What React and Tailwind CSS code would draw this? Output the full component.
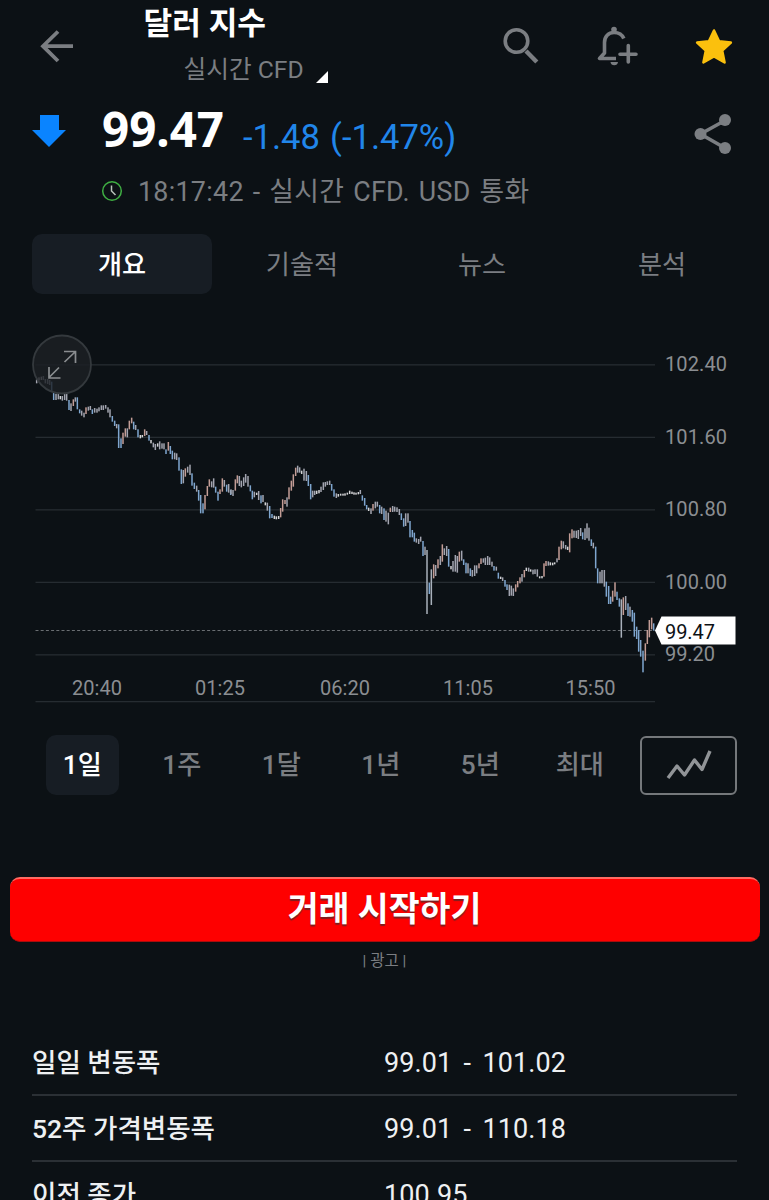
import clsx from 'clsx';

const TABS = ['개요', '기술적', '뉴스', '분석'];
const RANGES = ['1일', '1주', '1달', '1년', '5년', '최대'];

const STATS = [
  { label: '일일 변동폭', value: '99.01 - 101.02' },
  { label: '52주 가격변동폭', value: '99.01 - 110.18' },
  { label: '이전 종가', value: '100.95' },
];

const PRICE_TICKS = [
  { y: 45, label: '102.40' },
  { y: 117.5, label: '101.60' },
  { y: 190, label: '100.80' },
  { y: 262.5, label: '100.00' },
  { y: 335, label: '99.20' },
];

const TIME_TICKS = [
  { x: 97, label: '20:40' },
  { x: 220, label: '01:25' },
  { x: 345, label: '06:20' },
  { x: 468, label: '11:05' },
  { x: 590.5, label: '15:50' },
];

// Each bar is [x, high, low] in thirds of a pixel from the segment's origin.
const SEGMENTS = [
  {
    x: 20,
    y: 0,
    bars: [
      [50, 178, 190], [57, 172, 182], [64, 170, 180], [70, 168, 180], [76, 177, 190], [83, 177, 192], [89, 180, 195],
      [95, 185, 215], [101, 219, 240], [108, 222, 240], [115, 220, 238], [121, 228, 238], [127, 228, 242], [134, 218, 240],
      [140, 220, 242], [147, 240, 270], [153, 250, 273], [160, 238, 258], [166, 232, 245], [172, 232, 268], [179, 268, 280],
      [185, 272, 287], [192, 278, 292], [198, 262, 282], [205, 260, 272], [211, 258, 270], [217, 268, 282], [224, 264, 278],
      [231, 266, 278], [237, 262, 274], [244, 256, 270], [250, 256, 270], [257, 255, 266], [264, 262, 278], [270, 268, 292],
      [277, 288, 305], [284, 302, 318], [290, 312, 325], [296, 313, 384], [303, 355, 384], [309, 338, 372], [316, 325, 350],
      [322, 325, 352], [328, 302, 328], [335, 293, 310], [341, 305, 328], [347, 315, 330], [354, 328, 352], [361, 345, 355],
      [367, 345, 352], [374, 328, 348], [380, 333, 345], [387, 345, 362], [393, 360, 370], [400, 368, 382], [406, 372, 390],
      [413, 370, 380], [419, 364, 388], [426, 370, 386], [432, 370, 388], [438, 388, 402], [445, 366, 392], [451, 378, 402],
      [457, 392, 418], [464, 398, 418], [470, 400, 420], [477, 412, 452], [484, 448, 492], [490, 450, 490], [496, 445, 470],
      [503, 440, 458], [510, 434, 465], [516, 460, 497], [523, 488, 507], [530, 497, 515], [536, 510, 542], [542, 525, 580],
      [549, 550, 580], [555, 525, 568], [562, 498, 528], [568, 478, 500], [575, 484, 502], [581, 475, 503], [587, 500, 518],
      [594, 515, 542], [600, 508, 522], [607, 475, 515], [613, 480, 500], [620, 494, 515], [626, 492, 518], [632, 510, 525],
    ],
  },
  {
    x: 230,
    y: 120,
    bars: [
      [3, 148, 163], [9, 150, 168], [16, 118, 152], [22, 106, 130], [28, 108, 138], [34, 122, 142], [41, 112, 138],
      [47, 102, 128], [54, 108, 140], [61, 136, 154], [67, 152, 178], [73, 155, 172], [80, 158, 165], [86, 153, 180],
      [93, 166, 190], [99, 165, 186], [106, 187, 196], [112, 188, 212], [119, 198, 235], [126, 222, 234], [133, 227, 237],
      [139, 229, 238], [146, 228, 237], [152, 204, 232], [158, 178, 215], [165, 180, 192], [171, 172, 200], [177, 142, 178],
      [184, 122, 152], [190, 103, 140], [197, 83, 108], [203, 77, 98], [209, 82, 98], [215, 92, 102], [222, 86, 122],
      [229, 93, 123], [235, 105, 138], [242, 132, 178], [248, 152, 172], [254, 152, 165], [260, 152, 162], [267, 150, 160],
      [273, 140, 156], [280, 127, 150], [286, 126, 140], [292, 124, 135], [299, 122, 135], [305, 132, 152], [312, 148, 170],
      [319, 160, 174], [325, 162, 170], [332, 161, 167], [339, 161, 167], [345, 160, 167], [352, 158, 164], [359, 152, 162],
      [366, 155, 162], [372, 157, 164], [378, 158, 164], [385, 156, 163], [391, 150, 162], [397, 166, 182], [404, 174, 197],
      [410, 195, 208], [416, 203, 213], [423, 205, 222], [429, 192, 212], [436, 185, 205], [442, 185, 200], [449, 195, 220],
      [455, 200, 222], [462, 205, 240], [468, 212, 245], [475, 218, 253], [481, 203, 216], [488, 198, 216], [494, 200, 215],
      [501, 202, 216], [508, 207, 225], [514, 220, 240], [521, 235, 260], [527, 220, 258], [534, 220, 248], [540, 243, 292],
      [547, 270, 292], [553, 278, 305], [559, 295, 308], [566, 297, 312], [572, 290, 305], [579, 303, 348], [585, 320, 345],
      [591, 330, 522], [598, 428, 462],
    ],
  },
  {
    x: 430,
    y: 180,
    bars: [
      [4, 208, 315], [11, 193, 235], [17, 195, 228], [24, 178, 205], [31, 168, 195], [37, 133, 185], [43, 145, 165],
      [50, 138, 168], [56, 147, 200], [63, 198, 208], [69, 183, 215], [76, 165, 215], [82, 168, 218], [88, 155, 185],
      [95, 152, 182], [101, 178, 195], [108, 188, 220], [114, 190, 220], [121, 205, 228], [127, 210, 230], [134, 196, 228],
      [140, 196, 220], [147, 190, 205], [153, 175, 192], [160, 175, 188], [166, 173, 195], [173, 168, 195], [179, 172, 195],
      [186, 185, 200], [192, 198, 212], [199, 200, 212], [205, 218, 236], [212, 230, 237], [218, 232, 243], [225, 240, 260],
      [231, 253, 270], [238, 254, 288], [244, 257, 287], [250, 265, 288], [257, 253, 275], [263, 243, 262], [270, 232, 250],
      [276, 222, 245], [283, 210, 232], [289, 203, 213], [296, 203, 215], [302, 208, 215], [309, 209, 223], [315, 208, 222],
      [322, 208, 230], [329, 229, 235], [336, 228, 235], [342, 190, 230], [348, 183, 198], [355, 184, 197], [361, 187, 196],
      [368, 188, 196], [374, 187, 193], [381, 175, 187], [387, 140, 180], [394, 122, 148], [400, 124, 145], [407, 135, 148],
      [413, 140, 150], [419, 100, 157], [426, 88, 115], [432, 92, 113], [439, 92, 114], [445, 90, 117], [452, 84, 108],
      [458, 97, 118], [465, 85, 120], [471, 70, 115], [477, 83, 122], [484, 118, 138], [490, 128, 145], [497, 140, 205],
      [503, 205, 250], [510, 215, 250], [516, 210, 250], [523, 210, 260], [529, 245, 290], [536, 258, 312], [542, 290, 312],
      [548, 272, 305], [555, 247, 290], [561, 275, 300], [568, 295, 320], [574, 298, 413], [580, 292, 345], [587, 288, 330],
      [594, 310, 348], [600, 320, 350], [607, 330, 365], [613, 338, 410], [620, 380, 417], [626, 390, 455], [632, 420, 470],
      [639, 452, 517], [646, 430, 482], [652, 390, 432], [658, 360, 412], [665, 353, 388], [671, 370, 392],
    ],
  },
];

function barColor(bars, i) {
  const [, high, low] = bars[i];
  if (low - high < 11) return '#d3d4d6';
  const prev = bars[i - 1] || bars[i];
  const move = high + low - prev[1] - prev[2];
  if (low - high > 100) return '#a9b1bb';
  if (move > 20) return '#7fa6cf';
  if (move < -20) return '#c39d96';
  return '#a3a5b0';
}

export default function App() {
  return (
    <div className="h-[1200px] w-full overflow-hidden bg-[#0c1115] font-['Roboto','Noto_Sans_CJK_KR',sans-serif] text-[#7b7e82]">
      <Header />
      <Quote />
      <Tabs />
      <Chart />
      <RangeBar />
      <TradeBanner />
      <Stats />
    </div>
  );
}

function Header() {
  return (
    <header className="flex h-[92px] items-center">
      <svg viewBox="0 0 34 34" className="mt-0.5 ml-[39.500px] size-[34px] shrink-0" fill="none" stroke="#7b7e82" strokeWidth="3.8">
        <path d="M33 16.200H3M18 1.500 3 16.200 18 31" />
      </svg>
      <div className="ml-[70px] w-[186px] self-start pt-0.5">
        <h1 className="h-[44px] text-[31.200px] leading-[44px] font-bold whitespace-nowrap text-white">달러 지수</h1>
        <div className="ml-10 flex items-end">
          <span className="text-[24.700px] leading-[48px] whitespace-nowrap">실시간 CFD</span>
          <svg viewBox="0 0 12 12" className="mb-[11px] ml-3 size-3 shrink-0">
            <path d="M12 0v12H0z" fill="#fff" />
          </svg>
        </div>
      </div>
      <svg viewBox="0 0 38 38" className="ml-[172px] size-[38px] shrink-0" fill="none" stroke="#7b7e82">
        <circle cx="14.500" cy="14" r="11.300" strokeWidth="3.600" />
        <path d="m24 24 10.800 11" strokeWidth="4.400" />
      </svg>
      <svg viewBox="0 0 42 42" className="ml-[56px] size-[42px] shrink-0" fill="none" stroke="#7b7e82">
        <path
          d="M27.800 13.500C26 9 22 7.500 18 7.500c-5.500 0-9.500 4-9.500 10V28l-5 5.500H20"
          strokeWidth="3.600"
          strokeLinejoin="round"
        />
        <circle cx="18" cy="4.500" r="2.800" fill="#7b7e82" stroke="none" />
        <path d="M14.500 37h7.500a3.800 3.800 0 0 1-7.500 0z" fill="#7b7e82" stroke="none" />
        <path d="M32.300 20.500v16.500M24 29.300h16" strokeWidth="3.600" strokeLinecap="round" />
      </svg>
      <svg viewBox="0 0 40 38" className="ml-[56px] h-[38px] w-[40px] shrink-0">
        <path
          d="m20 3.500 5.100 10.700 11.800 1.300-8.700 8 2.400 12L20 29.500 9.400 35.500l2.400-12-8.700-8 11.800-1.300z"
          fill="#fbc00d"
          stroke="#fbc00d"
          strokeWidth="2.500"
          strokeLinejoin="round"
        />
      </svg>
    </header>
  );
}

function Quote() {
  return (
    <section className="h-[142px]">
      <div className="flex h-[76px] items-center">
        <svg viewBox="0 0 34 32" className="mt-0.5 ml-8 h-8 w-[34px] shrink-0">
          <path d="M8 0h19v15h7L17 32 0 15h8z" fill="#0a84ff" />
        </svg>
        <span className="-mt-0.5 ml-[36px] w-[140px] font-['Noto_Sans',sans-serif] text-[47.500px] leading-[76px] font-bold text-white">
          99.47
        </span>
        <span className="mt-[14px] ml-px w-[220px] text-[34.600px] leading-[48px] [word-spacing:1.5px] whitespace-nowrap text-[#2186ea]">
          -1.48 (-1.47%)
        </span>
        <svg viewBox="0 0 38 42" className="mt-2 ml-[231px] h-[42px] w-[38px] shrink-0" fill="#7b7e82">
          <path d="M31 7.500 6.500 21 31 35" fill="none" stroke="#7b7e82" strokeWidth="3.600" />
          <circle cx="6.500" cy="21" r="6" />
          <circle cx="31" cy="7" r="6" />
          <circle cx="31" cy="35" r="6" />
        </svg>
      </div>
      <div className="flex h-[46px] items-center">
        <svg viewBox="0 0 22 22" className="ml-[101px] size-[22px] shrink-0" fill="none">
          <circle cx="11" cy="11" r="9.300" stroke="#3fae43" strokeWidth="1.500" />
          <path d="M10.500 5.500V11l4 4" stroke="#b9c4bb" strokeWidth="1.500" />
        </svg>
        <span className="ml-[15px] pt-0.5 text-[26.800px] tracking-[0.3px] [word-spacing:2px] whitespace-nowrap">
          18:17:42 - 실시간 CFD. USD 통화
        </span>
      </div>
    </section>
  );
}

function Tabs() {
  return (
    <nav className="ml-8 grid w-[720px] grid-cols-4">
      {TABS.map((tab, i) => (
        <button
          key={tab}
          className={clsx('h-[60px] rounded-[10px] pt-1 text-[26.200px]', i === 0 && 'bg-[#171d24] font-medium text-white')}
        >
          {tab}
        </button>
      ))}
    </nav>
  );
}

function Chart() {
  return (
    <svg viewBox="0 0 769 384" className="mt-[26px] block h-[384px] w-[769px]">
      <g fill="#262c31">
        {PRICE_TICKS.map((t) => (
          <rect key={t.label} x="35.500" y={t.y - 0.8} width="619.500" height="1.300" />
        ))}
        <rect x="35.500" y="381" width="619.500" height="1.300" />
      </g>
      <path d="M35.500 310.500h619" stroke="#6a6e72" strokeWidth="1" strokeDasharray="3 2.200" />

      {SEGMENTS.map((seg) => (
        <g key={seg.x} transform={`translate(${seg.x} ${seg.y})`}>
          {seg.bars.map(([x, high, low], i) => (
            <rect
              key={x}
              x={x / 3 - 0.75}
              y={high / 3}
              width="1.500"
              height={(low - high) / 3}
              fill={barColor(seg.bars, i)}
            />
          ))}
        </g>
      ))}

      {/* expand button */}
      <circle cx="62" cy="44.500" r="29" fill="#1c2024" fillOpacity="0.820" stroke="#34393d" strokeWidth="1.800" />
      <path
        d="M64 31.500h11.500v11.500M75 32 64.500 42M49 47v11h11.500M49 57.500 59 47.500"
        fill="none"
        stroke="#8a8d90"
        strokeWidth="1.700"
      />

      <g fill="#8b8e92" fontSize="20">
        {PRICE_TICKS.map((t) => (
          <text key={t.label} x="665" y={t.y + 6} textLength={t.label.length > 5 ? 62 : 50}>
            {t.label}
          </text>
        ))}
        {TIME_TICKS.map((t) => (
          <text key={t.label} x={t.x} y="375" textAnchor="middle">
            {t.label}
          </text>
        ))}
      </g>

      <path d="M655 310.500 661.500 296.500h74v28h-74z" fill="#fff" />
      <text x="665" y="318.500" fontSize="20" fill="#0c1115" textLength="50">
        99.47
      </text>
    </svg>
  );
}

function RangeBar() {
  return (
    <div className="mt-[31px] flex h-[60px] items-center">
      <div className="ml-[32.500px] grid w-[597px] grid-cols-6 justify-items-center">
        {RANGES.map((range, i) => (
          <button
            key={range}
            className={clsx(
              'h-[60px] w-[73px] rounded-[10px] pt-0.5 text-[26.200px] font-medium whitespace-nowrap',
              i === 0 && 'bg-[#171d24] text-white',
            )}
          >
            {range}
          </button>
        ))}
      </div>
      <button className="ml-[10.500px] flex h-[59px] w-[97px] items-center justify-center rounded-md border-2 border-[#75787b]">
        <svg viewBox="0 0 46 32" className="h-8 w-[46px]" fill="none" stroke="#919497" strokeWidth="3.400" strokeLinejoin="round">
          <path d="M2 29 11 17l7.500 9L28.500 11l7.500 9.500L44 2" />
        </svg>
      </button>
    </div>
  );
}

function TradeBanner() {
  return (
    <section className="mt-[82px] flex flex-col items-center">
      <button className="h-[65px] w-[750px] rounded-[10px] border-t-2 border-b border-t-[#ff6b62] border-b-[#a80d0d] bg-[#fe0000] text-[33.600px] font-bold text-white [text-shadow:0_2px_1px_#7a2020]">
        거래 시작하기
      </button>
      <span className="mt-[7px] text-[15.500px] leading-6">| 광고 |</span>
    </section>
  );
}

function Stats() {
  return (
    <dl className="mt-[57px] ml-8 w-[705px] text-[#eef0f2]">
      {STATS.map((row) => (
        <div key={row.label} className="flex h-[66px] items-center border-b-2 border-[#2b3035] pt-0.5">
          <dt className="w-[352px] text-[26.500px] font-medium whitespace-nowrap">{row.label}</dt>
          <dd className="text-[27px] tracking-[0.1px] [word-spacing:4.5px]">{row.value}</dd>
        </div>
      ))}
    </dl>
  );
}
